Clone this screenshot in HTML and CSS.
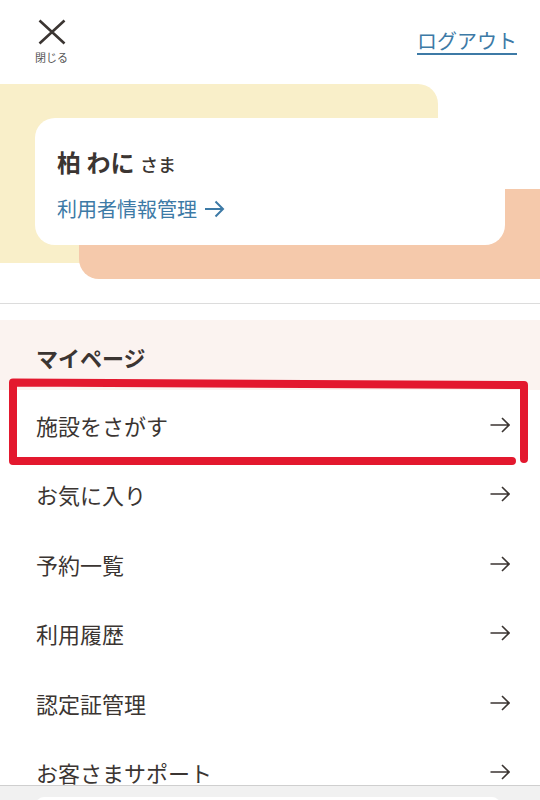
FILE: index.html
```html
<!DOCTYPE html>
<html lang="ja">
<head>
    <meta charset="UTF-8" />
    <meta name="viewport" content="width=device-width, initial-scale=1.0" />
    <title>マイページ</title>
    <link rel="stylesheet" href="styles.css">
</head>
<body>
    <header class="topBar">
        <button class="closeBtn" type="button">
            <svg width="28" height="26" viewBox="0 0 28 26">
                <path d="M1.5 1.5 L26.5 24.5 M26.5 1.5 L1.5 24.5" />
            </svg>
            <span>閉じる</span>
        </button>
        <a class="logout" href="#">ログアウト</a>
    </header>

    <section class="userArea">
        <div class="userCard">
            <p class="userName">柏 わに <span>さま</span></p>
            <a class="userLink" href="#">利用者情報管理
                <svg width="21" height="18" viewBox="0 0 21 18">
                    <path d="M1 9 H19 M11.5 1.5 L19 9 L11.5 16.5" />
                </svg>
            </a>
        </div>
    </section>

    <hr class="divider">

    <section class="myPage">
        <h2 class="myPageTitle">マイページ</h2>
        <ul class="menu">
            <li><a href="#">施設をさがす<svg class="arrow" viewBox="0 0 20 16"><path d="M0.5 8 H19 M12 1 L19 8 L12 15" /></svg></a></li>
            <li><a href="#">お気に入り<svg class="arrow" viewBox="0 0 20 16"><path d="M0.5 8 H19 M12 1 L19 8 L12 15" /></svg></a></li>
            <li><a href="#">予約一覧<svg class="arrow" viewBox="0 0 20 16"><path d="M0.5 8 H19 M12 1 L19 8 L12 15" /></svg></a></li>
            <li><a href="#">利用履歴<svg class="arrow" viewBox="0 0 20 16"><path d="M0.5 8 H19 M12 1 L19 8 L12 15" /></svg></a></li>
            <li><a href="#">認定証管理<svg class="arrow" viewBox="0 0 20 16"><path d="M0.5 8 H19 M12 1 L19 8 L12 15" /></svg></a></li>
            <li><a href="#">お客さまサポート<svg class="arrow" viewBox="0 0 20 16"><path d="M0.5 8 H19 M12 1 L19 8 L12 15" /></svg></a></li>
        </ul>
    </section>

    <!-- red marker drawn over the first menu row -->
    <svg class="highlight" width="540" height="110" viewBox="0 0 540 110">
        <path d="M512 91 L13 91 L13 12.5 L524 15 L524 89" />
    </svg>

    <div class="bottomBar">
        <div class="bottomSheet"></div>
    </div>
</body>
</html>
```

FILE: styles.css
```css
* {
    box-sizing: border-box;
}

body {
    margin: 0;
    font-family: "Noto Sans CJK JP", "Noto Sans", sans-serif;
    color: #3b3532;
    background: #ffffff;
    overflow: hidden;
}

a {
    text-decoration: none;
    color: inherit;
}

/* header */
.topBar {
    height: 84px;
    display: flex;
    justify-content: space-between;
    align-items: flex-start;
    padding: 19px 23px 0 34px;
}

.closeBtn {
    width: 35px;
    padding: 0;
    border: none;
    background: none;
    display: flex;
    flex-direction: column;
    align-items: center;
    font-family: inherit;
    color: #555;
    cursor: pointer;
}

.closeBtn svg path {
    stroke: #3b3532;
    stroke-width: 2.6;
    fill: none;
}

.closeBtn span {
    margin-top: 5px;
    font-size: 11px;
    line-height: 14px;
}

.logout {
    margin-top: 8px;
    font-size: 20px;
    line-height: 28px;
    color: #3d7aa6;
    text-decoration: underline;
    text-underline-offset: 4px;
    text-decoration-thickness: 2px;
}

/* user card */
.userArea {
    position: relative;
    height: 195px;
    padding-top: 34px;
}

.userArea::before {
    content: "";
    position: absolute;
    left: 0;
    top: 0;
    width: 438px;
    height: 179px;
    background: #f9efc9;
    border-top-right-radius: 20px;
}

.userArea::after {
    content: "";
    position: absolute;
    left: 79px;
    right: 0;
    top: 105px;
    bottom: 0;
    background: #f5c9ab;
    border-bottom-left-radius: 20px;
}

.userCard {
    position: relative;
    z-index: 1;
    margin-left: 35px;
    width: 470px;
    height: 127px;
    background: #ffffff;
    border-radius: 20px;
    padding: 27px 22px 0;
}

.userName {
    margin: 0;
    font-size: 24px;
    line-height: 34px;
    font-weight: 700;
}

.userName span {
    font-size: 18px;
    font-weight: 500;
}

.userLink {
    margin-top: 14px;
    display: flex;
    align-items: center;
    gap: 7px;
    font-size: 20px;
    line-height: 28px;
    color: #3d7aa6;
}

.userLink svg path {
    stroke: #3d7aa6;
    stroke-width: 2;
    fill: none;
}

.divider {
    margin: 24px 0 0;
    border: none;
    border-top: 1px solid #dcdcdc;
}

/* my page menu */
.myPage {
    margin-top: 16px;
}

.myPageTitle {
    margin: 0;
    background: #fbf3f0;
    padding: 22px 36px 18px;
    font-size: 22px;
    line-height: 30px;
    font-weight: 700;
}

.menu {
    list-style: none;
    margin: 0;
    padding: 0;
}

.menu a {
    height: 69.5px;
    display: flex;
    align-items: center;
    justify-content: space-between;
    padding: 0 30px 0 36px;
    font-size: 22px;
    line-height: 30px;
}

.arrow {
    width: 20px;
    height: 16px;
}

.arrow path {
    stroke: #3b3532;
    stroke-width: 1.6;
    fill: none;
}

.highlight {
    position: absolute;
    left: 0;
    top: 370px;
}

.highlight path {
    stroke: #e3182e;
    stroke-width: 8;
    stroke-linecap: round;
    stroke-linejoin: round;
    fill: none;
}

/* browser bottom bar */
.bottomBar {
    position: fixed;
    left: 0;
    right: 0;
    bottom: 0;
    height: 15px;
    background: #f1f1f1;
    border-top: 1px solid #cfcfcf;
    padding: 11px 40px 0 36px;
}

.bottomSheet {
    height: 10px;
    background: #ffffff;
    border-radius: 8px 8px 0 0;
}
```
